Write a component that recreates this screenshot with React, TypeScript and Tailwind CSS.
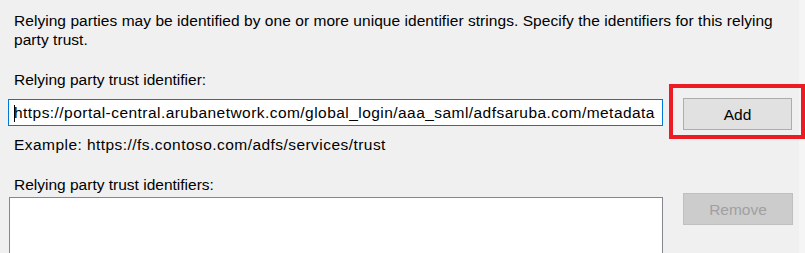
export default function App() {
  return (
    <div
      className="relative flex h-[253px] w-[805px] overflow-hidden bg-[#f0f0f0] text-black"
      style={{ fontFamily: '"Liberation Sans", Arial, sans-serif' }}
    >
      <div className="flex w-[799px] flex-col text-[15.5px] leading-[19px]">
        {/* Intro */}
        <p className="ml-[14px] mt-[11px] w-[775px] tracking-[0.05px]">
          Relying parties may be identified by one or more unique identifier strings. Specify the identifiers for this relying
          party trust.
        </p>

        <div className="ml-[14px] mt-[21px]">Relying party trust identifier:</div>

        {/* Identifier input + Add */}
        <div className="mt-[9px] flex items-start">
          <div className="relative ml-[8px] mt-px flex h-[27px] w-[655px] items-center border border-[#0078d7] bg-white pl-[5px]">
            <span className="absolute left-[5px] top-[5px] h-[17px] w-px bg-black" />
            <span className="whitespace-nowrap tracking-[0.45px]">
              https://portal-central.arubanetwork.com/global_login/aaa_saml/adfsaruba.com/metadata
            </span>
          </div>
          <button className="ml-[20px] h-[32px] w-[109px] border border-[#adadad] bg-[#e1e1e1] text-center">
            Add
          </button>
        </div>

        <div className="ml-[14px] mt-[5px] tracking-[0.45px]">Example: https://fs.contoso.com/adfs/services/trust</div>

        <div className="ml-[14px] mt-[21px]">Relying party trust identifiers:</div>

        {/* Identifiers list + Remove */}
        <div className="mt-[3px] flex items-start">
          <div className="ml-[9px] h-[70px] w-[654px] border border-[#828790] bg-white" />
          <button
            disabled
            className="ml-[20px] mt-[-4px] h-[32px] w-[110px] border border-[#bfbfbf] bg-[#cccccc] text-center text-[#a0a0a0]"
          >
            Remove
          </button>
        </div>
      </div>

      <div className="w-[6px] bg-[#f5f5f5]" />

      {/* Annotation highlight */}
      <div className="pointer-events-none absolute left-[669px] top-[84px] h-[55px] w-[136px] border-4 border-[#ed1c24]" />
    </div>
  );
}
